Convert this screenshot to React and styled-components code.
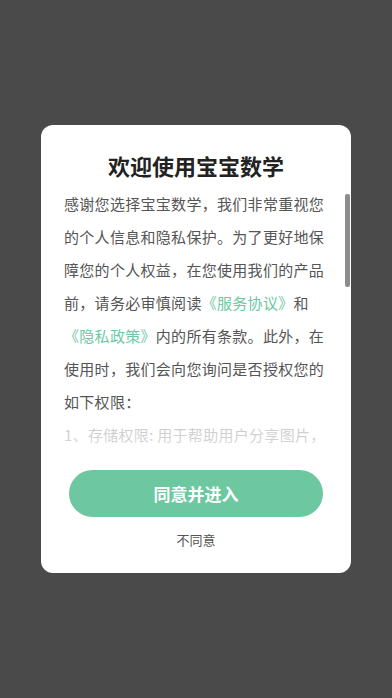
import React from 'react'
import styled, { createGlobalStyle } from 'styled-components'

const Global = createGlobalStyle`
  html, body {
    margin: 0;
    padding: 0;
    height: 100%;
    background: #4a4a4a;
    font-family: "Noto Sans CJK SC", "Noto Sans", sans-serif;
  }
  #root { height: 100%; }
`

const Screen = styled.div`
  height: 698px;
  display: flex;
  align-items: center;
  justify-content: center;
`

const Card = styled.div`
  position: relative;
  width: 310px;
  background: #fff;
  border-radius: 12px;
  padding: 20px 0 23px;
  box-sizing: border-box;
  display: flex;
  flex-direction: column;
  align-items: center;
`

const Title = styled.h2`
  margin: 0 0 2px;
  font-size: 22px;
  line-height: 40px;
  font-weight: 600;
  color: #222;
`

const ScrollWrap = styled.div`
  position: relative;
  align-self: stretch;
  height: 263px;
`

const Scroll = styled.div`
  height: 100%;
  overflow-y: auto;
  padding: 0 23px;
  scrollbar-width: none;
  &::-webkit-scrollbar { display: none; }
`

const Body = styled.p`
  margin: 0;
  font-size: 15px;
  letter-spacing: 0.3px;
  line-height: 33px;
  color: #555;
`

const Link = styled.span`
  color: #6dc8a2;
`

const Fade = styled.div`
  position: absolute;
  left: 0;
  right: 0;
  bottom: 0;
  height: 34px;
  background: linear-gradient(rgba(255,255,255,0.66), rgba(255,255,255,0.78));
  pointer-events: none;
`

const Thumb = styled.div`
  position: absolute;
  right: 1px;
  top: 7px;
  width: 5px;
  height: 93px;
  border-radius: 2px;
  background: #8c8c8c;
`

const AgreeButton = styled.button`
  margin-top: 20px;
  width: 254px;
  height: 47px;
  border: none;
  border-radius: 24px;
  background: #6dc8a2;
  color: #fff;
  font-family: inherit;
  font-size: 17px;
  font-weight: 600;
  cursor: pointer;
`

const Decline = styled.div`
  margin-top: 13px;
  font-size: 13px;
  line-height: 20px;
  color: #555;
  cursor: pointer;
`

export default function App() {
  return (
    <>
      <Global />
      <Screen>
        <Card>
          <Title>欢迎使用宝宝数学</Title>
          <ScrollWrap>
            <Scroll>
              <Body>
                感谢您选择宝宝数学，我们非常重视您的个人信息和隐私保护。为了更好地保障您的个人权益，在您使用我们的产品前，请务必审慎阅读
                <Link>《服务协议》</Link>和<Link>《隐私政策》</Link>
                内的所有条款。此外，在使用时，我们会向您询问是否授权您的如下权限：
              </Body>
              <Body>1、存储权限: 用于帮助用户分享图片，保存学习记录；</Body>
              <Body>2、设备信息: 用于识别设备，保障账号安全；</Body>
              <Body>3、网络权限: 用于加载课程内容与更新。</Body>
              <Body>
                上述权限均不会默认开启，只有经过您明示授权才会在为实现功能或服务时使用。您可以在设置中随时撤回授权。如您同意，请点击“同意并进入”开始使用我们的产品和服务。
              </Body>
            </Scroll>
            <Fade />
            <Thumb />
          </ScrollWrap>
          <AgreeButton>同意并进入</AgreeButton>
          <Decline>不同意</Decline>
        </Card>
      </Screen>
    </>
  )
}
